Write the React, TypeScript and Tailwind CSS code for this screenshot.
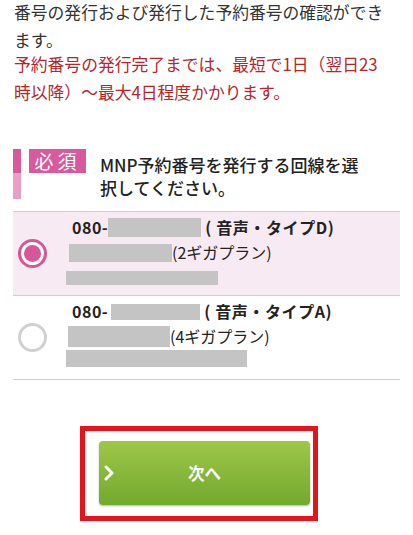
import React from 'react';

const FONT = { fontFamily: '"Noto Sans CJK JP", "Noto Sans", sans-serif' };

interface LineOption {
    type: string;
    plan: string;
    selected?: boolean;
    masks: { num: string; name: string; addr: string };
}

const options: LineOption[] = [
    {
        type: '( 音声・タイプD)',
        plan: '(2ギガプラン)',
        selected: true,
        masks: {
            num: 'w-[93px] h-[19px]',
            name: 'ml-[3px] w-[103px] h-[18px]',
            addr: 'w-[152px] h-[14px] mt-[6px]',
        },
    },
    {
        type: '( 音声・タイプA)',
        plan: '(4ギガプラン)',
        masks: {
            num: 'ml-[3px] w-[89px] h-[16px]',
            name: 'ml-[2px] w-[102px] h-[21px]',
            addr: 'w-[181px] h-[17px] mt-[1px]',
        },
    },
];

function Radio({ checked }: { checked?: boolean }) {
    if (checked) {
        return (
            <div className="w-[29px] h-[29px] rounded-full border-[3px] border-[#d4579a] bg-white p-[3px]">
                <div className="w-full h-full rounded-full bg-[#d6579b]" />
            </div>
        );
    }
    return <div className="w-[29px] h-[29px] rounded-full border-[3px] border-[#d0d0d0] bg-white" />;
}

function OptionRow({ opt }: { opt: LineOption }) {
    return (
        <div
            className={`flex items-center border-b border-[#cfcfcf] h-[84px] ${
                opt.selected ? 'bg-[#f7eaf2]' : 'bg-white'
            }`}
        >
            <div className="pl-[5px] w-[53px] shrink-0">
                <Radio checked={opt.selected} />
            </div>
            <div className="flex flex-col text-[16px] leading-[25px] text-[#222] pb-[2px]">
                <div className="flex items-center h-[25px] font-bold">
                    <span className="ml-[6px] tracking-[0.5px]">080-</span>
                    <span className={`inline-block bg-[#c4c4c4] ${opt.masks.num}`} />
                    <span className="ml-[4px] tracking-[0.6px]">{opt.type}</span>
                </div>
                <div className="flex items-center h-[25px]">
                    <span className={`inline-block bg-[#c4c4c4] ${opt.masks.name}`} />
                    <span>{opt.plan}</span>
                </div>
                <div className="flex items-start h-[25px]">
                    <span className={`inline-block bg-[#c4c4c4] ${opt.masks.addr}`} />
                </div>
            </div>
        </div>
    );
}

export default function App() {
    return (
        <div className="w-[413px] h-[535px] bg-white overflow-hidden" style={FONT}>
            {/* intro text */}
            <div className="px-[14px] -mt-[2px] text-[16.8px] leading-[28px]">
                <p className="text-[#333]">
                    番号の発行および発行した予約番号の確認ができます。
                </p>
                <p className="-mt-[4px] text-[#b3262b]">
                    予約番号の発行完了までは、最短で1日（翌日23
                    <br />
                    時以降）～最大4日程度かかります。
                </p>
            </div>

            {/* required heading */}
            <div className="mx-[13px] mt-[43px] flex h-[50px]">
                <div className="w-[8px] flex flex-col shrink-0">
                    <div className="h-[24px] bg-[#d65a9c]" />
                    <div className="flex-1 bg-[#e8a0c7]" />
                </div>
                <div className="ml-[8px] w-[57px] h-[24px] bg-[#d65a9c] text-white text-[19px] leading-[24px] tracking-[4px] text-center shrink-0">
                    必須
                </div>
                <p className="ml-[14px] w-[266px] pt-[4px] text-[17px] leading-[23px] font-medium text-[#222]">
                    MNP予約番号を発行する回線を選択してください。
                </p>
            </div>

            {/* line list */}
            <div className="mx-[13px] mt-[12px] border-t border-[#cfcfcf]">
                {options.map((opt, i) => (
                    <OptionRow key={i} opt={opt} />
                ))}
            </div>

            {/* next button (highlighted) */}
            <div className="ml-[80px] mt-[46px] w-[238px] h-[95px] border-[5px] border-[#e3141c] pl-[14px] pt-[10px]">
                <button className="relative w-[211px] h-[64px] rounded-[4px] bg-gradient-to-b from-[#9dc749] to-[#73a92d] shadow-[0_1px_2px_rgba(0,0,0,0.3)] flex items-center justify-center text-white font-bold text-[16.5px]">
                    <svg
                        className="absolute left-[5px] top-1/2 -translate-y-1/2"
                        width="11"
                        height="16"
                        viewBox="0 0 11 16"
                        fill="none"
                    >
                        <path d="M2 2l6 6-6 6" stroke="white" strokeWidth="3" strokeLinecap="round" strokeLinejoin="round" />
                    </svg>
                    次へ
                </button>
            </div>
        </div>
    );
}
